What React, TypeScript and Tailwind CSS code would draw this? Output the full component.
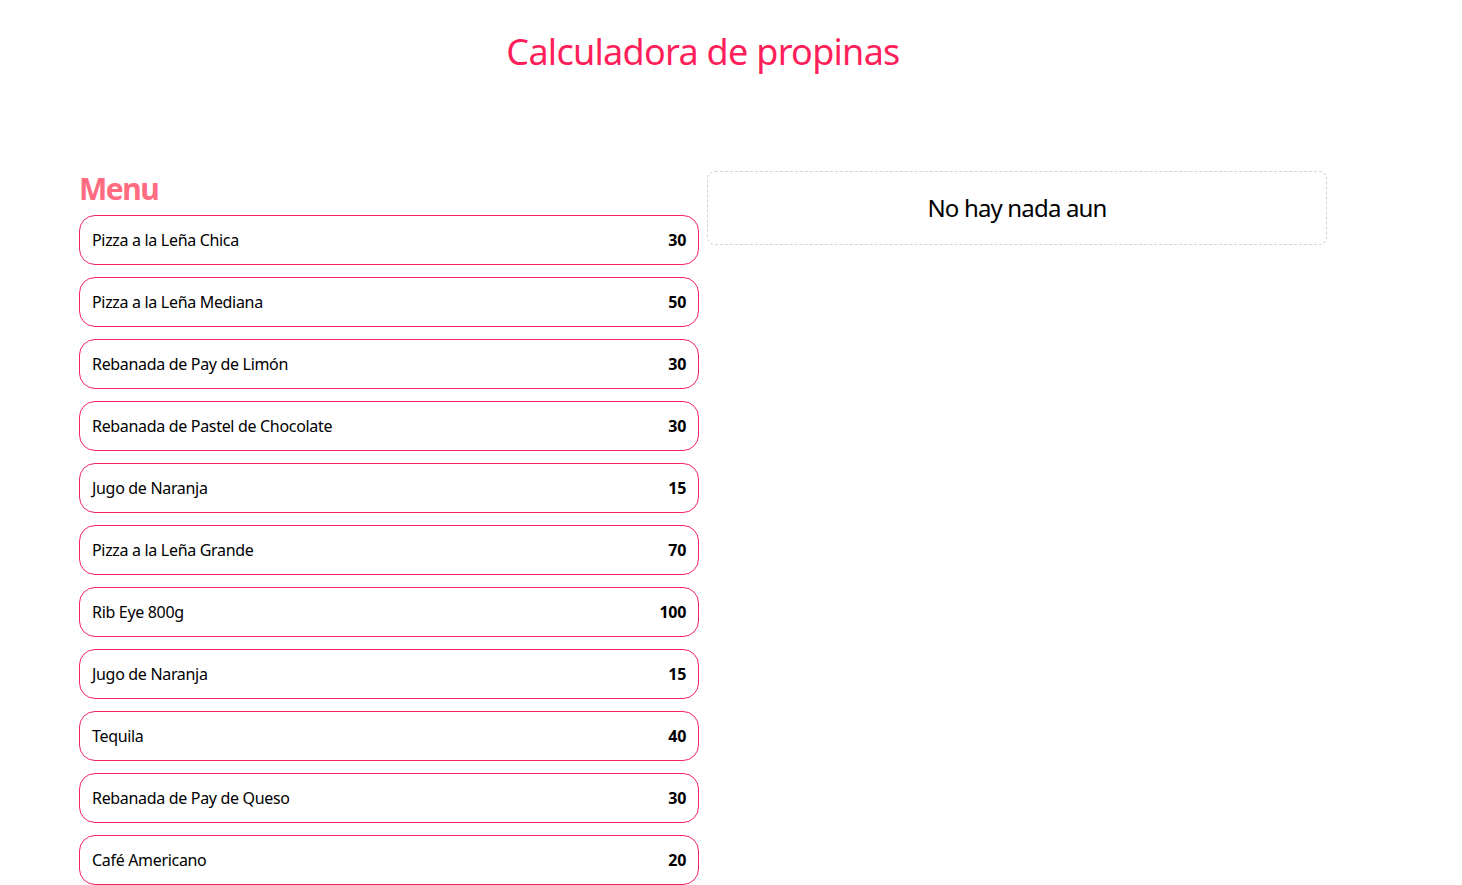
const MENU: Array<{ id: number; name: string; price: number }> = [
  { id: 1, name: 'Pizza a la Leña Chica', price: 30 },
  { id: 2, name: 'Pizza a la Leña Mediana', price: 50 },
  { id: 3, name: 'Rebanada de Pay de Limón', price: 30 },
  { id: 4, name: 'Rebanada de Pastel de Chocolate', price: 30 },
  { id: 5, name: 'Jugo de Naranja', price: 15 },
  { id: 6, name: 'Pizza a la Leña Grande', price: 70 },
  { id: 7, name: 'Rib Eye 800g', price: 100 },
  { id: 8, name: 'Jugo de Naranja', price: 15 },
  { id: 9, name: 'Tequila', price: 40 },
  { id: 10, name: 'Rebanada de Pay de Queso', price: 30 },
  { id: 11, name: 'Café Americano', price: 20 },
]

function MenuItem({ name, price }: { name: string; price: number }) {
  return (
    <button className="flex w-full items-center justify-between rounded-2xl border border-[#f5245f] px-3 py-3 text-left text-base leading-6 tracking-[-0.02em] text-black">
      <p>{name}</p>
      <p className="font-bold">{price}</p>
    </button>
  )
}

export default function App() {
  return (
    <div className="w-[1406px] bg-white font-['Noto_Sans',sans-serif]">
      <header className="pt-8 pb-[99px]">
        <h1 className="text-center text-4xl leading-10 tracking-[-0.02em] text-[#ff1f5a]">Calculadora de propinas</h1>
      </header>

      <main className="mx-auto grid max-w-7xl grid-cols-2 gap-2 px-4">
        <div>
          <h2 className="mb-2 text-3xl leading-9 font-bold tracking-[-0.05em] text-[#ff6b81]">Menu</h2>
          <div className="space-y-3">
            {MENU.map((item) => (
              <MenuItem key={item.id} name={item.name} price={item.price} />
            ))}
          </div>
        </div>

        <div>
          <div className="rounded-lg border border-dashed border-slate-300 py-5">
            <p className="text-center text-2xl leading-8 tracking-[-0.035em]">No hay nada aun</p>
          </div>
        </div>
      </main>
    </div>
  )
}
